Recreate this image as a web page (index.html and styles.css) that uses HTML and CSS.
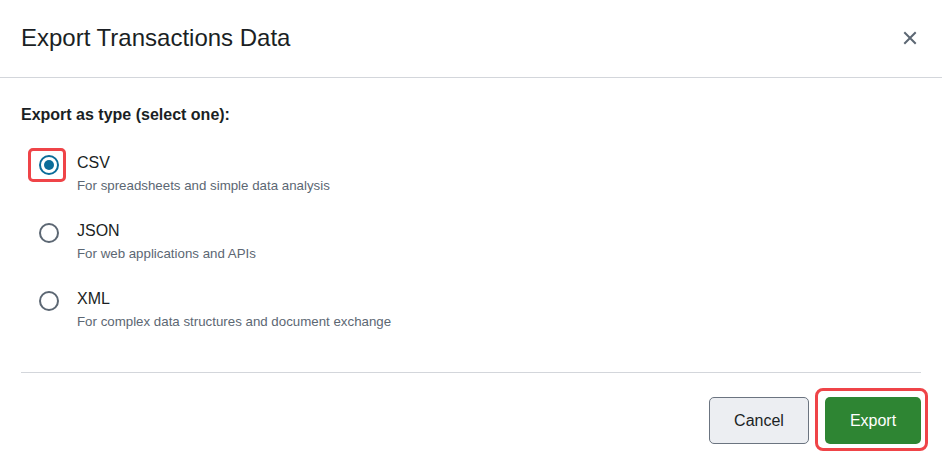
FILE: index.html
```html
<!DOCTYPE html>
<html lang="en">
<head>
<meta charset="utf-8">
<title>Export Transactions Data</title>
<link rel="stylesheet" href="styles.css">
</head>
<body>
<div class="dialog" role="dialog" aria-labelledby="dlg-title">
  <header class="dialog-header">
    <h1 id="dlg-title" class="dialog-title">Export Transactions Data</h1>
    <button class="close-btn" aria-label="Close">
      <svg width="14" height="14" viewBox="0 0 14 14" aria-hidden="true">
        <path d="M2 2 L12 12 M12 2 L2 12" stroke="currentColor" stroke-width="2" stroke-linecap="square" fill="none"/>
      </svg>
    </button>
  </header>

  <div class="dialog-body">
    <p class="group-label">Export as type (select one):</p>
    <div class="options">
      <label class="option">
        <span class="radio-wrap focused"><input type="radio" name="fmt" value="csv" checked><span class="radio"></span></span>
        <span class="option-text">
          <span class="option-title">CSV</span>
          <span class="option-desc">For spreadsheets and simple data analysis</span>
        </span>
      </label>
      <label class="option">
        <span class="radio-wrap"><input type="radio" name="fmt" value="json"><span class="radio"></span></span>
        <span class="option-text">
          <span class="option-title">JSON</span>
          <span class="option-desc">For web applications and APIs</span>
        </span>
      </label>
      <label class="option">
        <span class="radio-wrap"><input type="radio" name="fmt" value="xml"><span class="radio"></span></span>
        <span class="option-text">
          <span class="option-title">XML</span>
          <span class="option-desc">For complex data structures and document exchange</span>
        </span>
      </label>
    </div>
  </div>

  <footer class="dialog-footer">
    <button class="btn btn-secondary">Cancel</button>
    <button class="btn btn-primary focused">Export</button>
  </footer>
</div>
</body>
</html>
```

FILE: styles.css
```css
* { box-sizing: border-box; }

html, body {
  margin: 0;
  padding: 0;
  background: #ffffff;
}

body {
  font-family: "Liberation Sans", Arial, Helvetica, sans-serif;
  color: #1b1f24;
  width: 942px;
  height: 461px;
  overflow: hidden;
}

.dialog {
  display: flex;
  flex-direction: column;
  height: 100%;
}

/* header */
.dialog-header {
  display: flex;
  align-items: center;
  justify-content: space-between;
  height: 78px;
  padding: 0 21px 1px 21px;
  border-bottom: 1px solid #d3d6db;
}

.dialog-title {
  margin: 0;
  font-size: 24px;
  line-height: 28px;
  font-weight: 400;
  color: #1b1f24;
}

.close-btn {
  display: flex;
  align-items: center;
  justify-content: center;
  width: 24px;
  height: 24px;
  margin-right: -1px;
  padding: 0;
  border: 0;
  background: transparent;
  color: #5c6773;
  cursor: pointer;
}

/* body */
.dialog-body {
  padding: 27px 21px 0 21px;
  flex: 1;
}

.group-label {
  margin: 0;
  font-size: 16px;
  line-height: 20px;
  font-weight: 700;
  color: #1b1f24;
}

.options {
  display: flex;
  flex-direction: column;
  gap: 26px;
  margin-top: 28px;
  padding-left: 7px;
}

.option {
  display: flex;
  align-items: flex-start;
  gap: 11px;
  cursor: pointer;
}

.radio-wrap {
  position: relative;
  display: flex;
  align-items: center;
  justify-content: center;
  width: 38px;
  height: 34px;
  margin-top: -5px;
  padding-left: 4px;
}

.radio-wrap input {
  position: absolute;
  opacity: 0;
  width: 0;
  height: 0;
  margin: 0;
}

.radio {
  width: 20px;
  height: 20px;
  border-radius: 50%;
  border: 2px solid #5c6773;
  background: #fff;
  display: flex;
  align-items: center;
  justify-content: center;
}

.radio-wrap input:checked + .radio {
  border-color: #0b6c99;
}

.radio-wrap input:checked + .radio::after {
  content: "";
  width: 10px;
  height: 10px;
  border-radius: 50%;
  background: #0b6c99;
}

/* focus ring drawn over the control */
.focused::after {
  content: "";
  position: absolute;
  border: 3px solid #ef4448;
  pointer-events: none;
}

.radio-wrap.focused::after {
  inset: 0;
  border-radius: 5px;
}

.option-text {
  display: flex;
  flex-direction: column;
}

.option-title {
  font-size: 16px;
  line-height: 20px;
  color: #1b1f24;
}

.option-desc {
  margin-top: 4px;
  font-size: 13.3px;
  line-height: 18px;
  color: #5c6773;
}

/* footer */
.dialog-footer {
  display: flex;
  justify-content: flex-end;
  gap: 16px;
  margin: 0 21px;
  padding: 24px 0 17px 0;
  border-top: 1px solid #d3d6db;
}

.btn {
  position: relative;
  height: 47px;
  padding: 0;
  border-radius: 5px;
  font-family: inherit;
  font-size: 16px;
  cursor: pointer;
}

.btn-secondary {
  width: 100px;
  background: #eceef2;
  border: 1px solid #6b7480;
  color: #1b1f24;
}

.btn-primary {
  width: 96px;
  background: #2e8533;
  border: 0;
  color: #ffffff;
}

.btn-primary.focused::after {
  top: -9px;
  left: -10px;
  right: -7px;
  bottom: -7px;
  border-radius: 8px;
}
```
